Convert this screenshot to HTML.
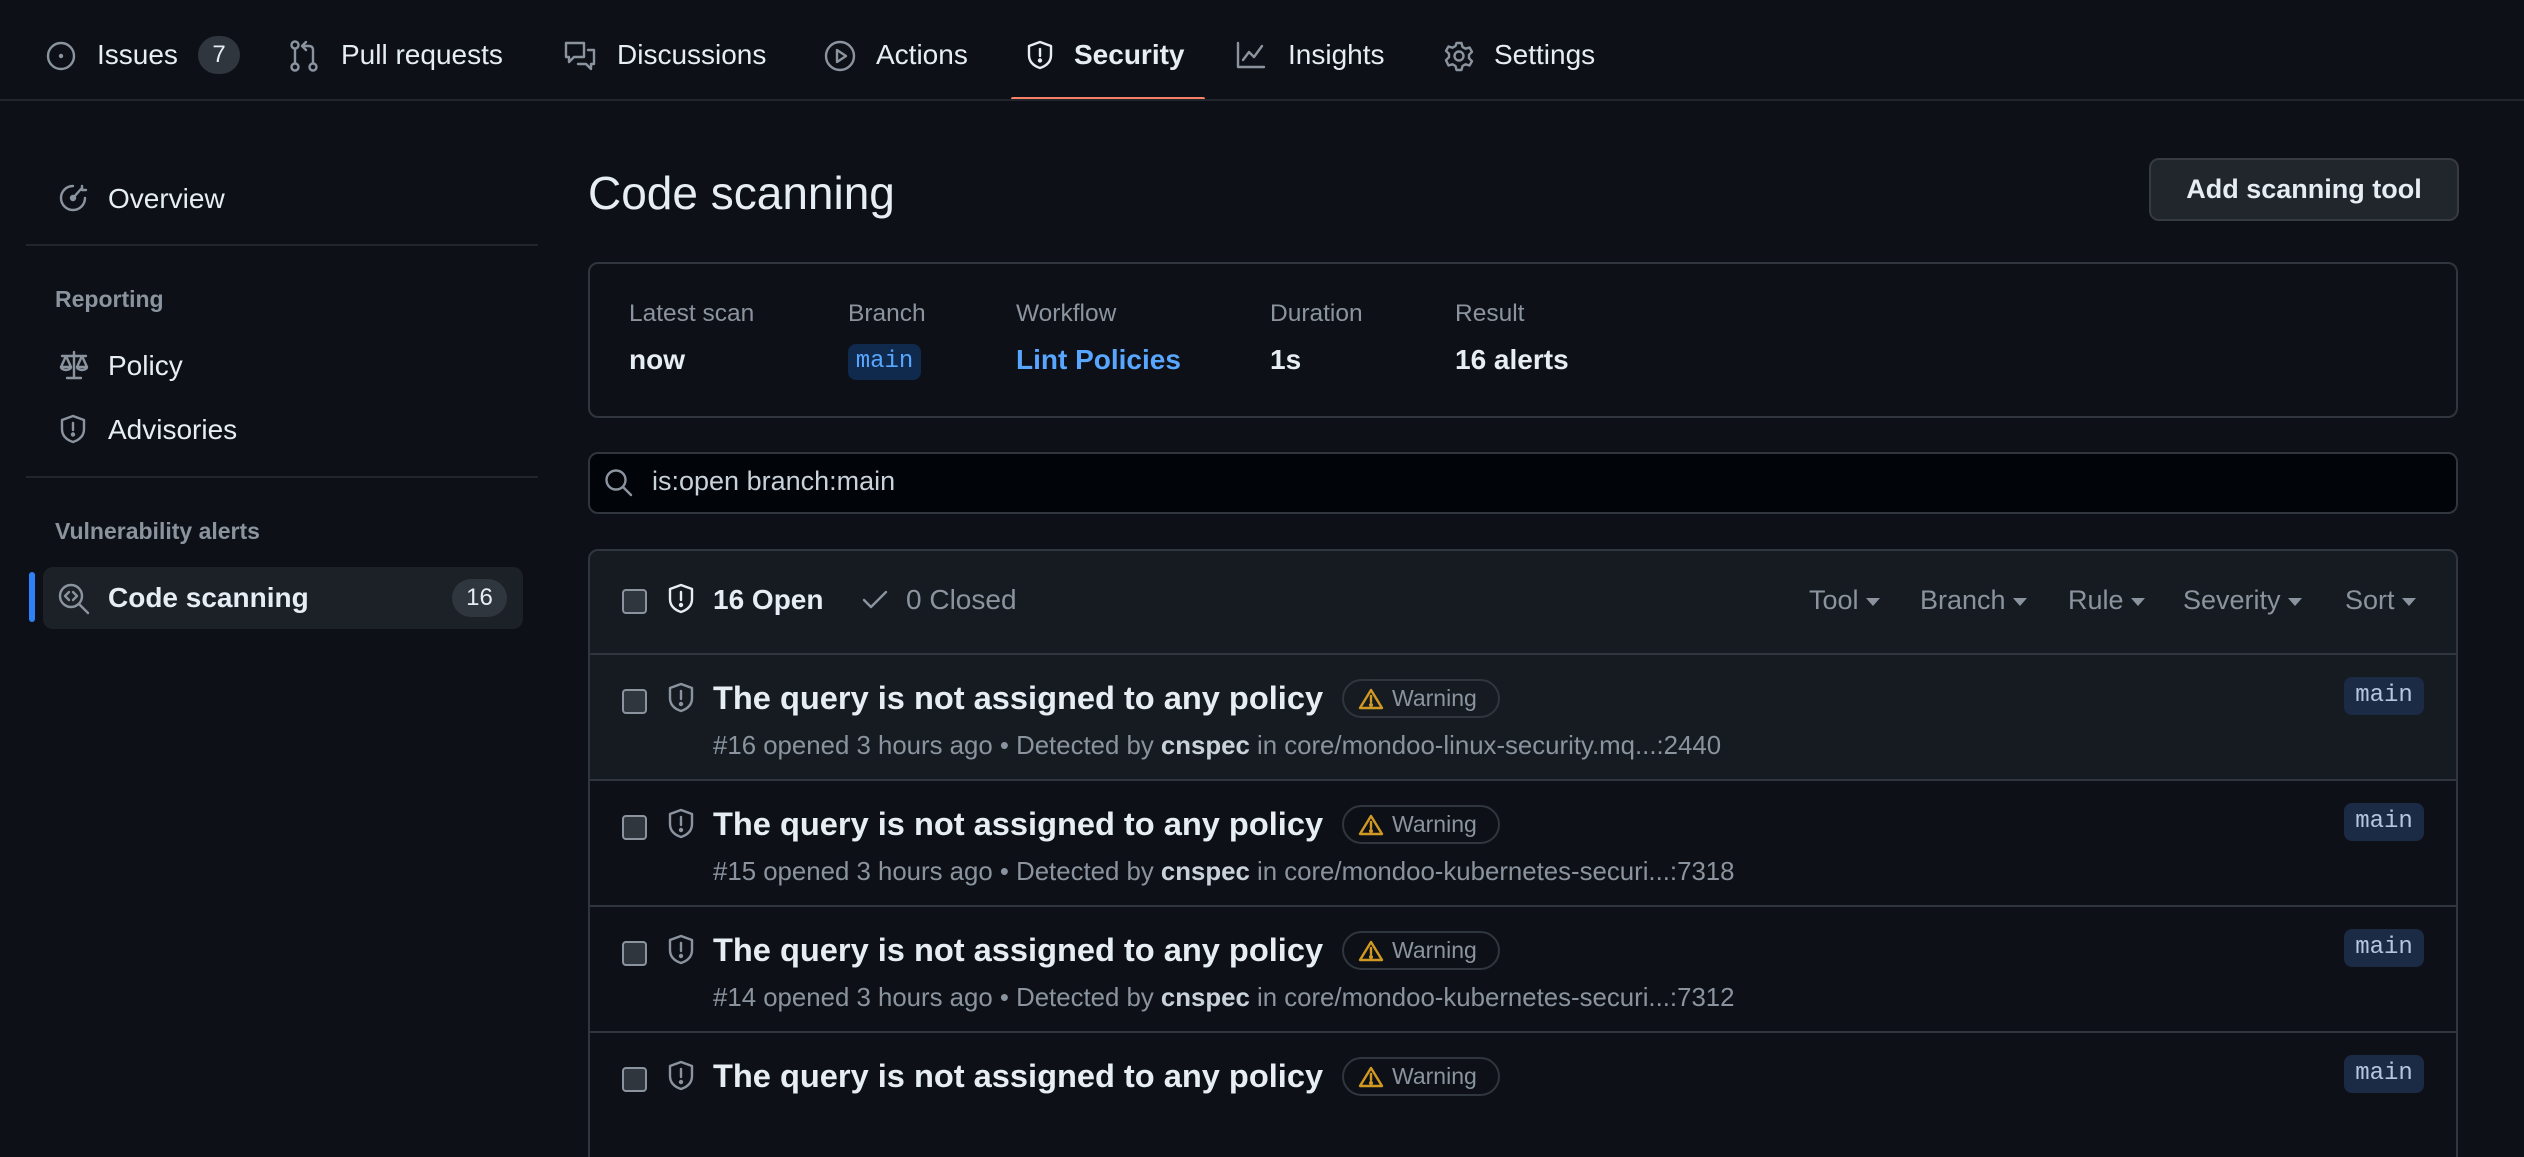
<!DOCTYPE html>
<html><head><meta charset="utf-8"><style>
*{box-sizing:border-box;margin:0;padding:0}
body{width:2524px;height:1086px;background:#0d1117;color:#e6edf3;font-family:"Liberation Sans",sans-serif;position:relative;overflow:hidden}
.a{position:absolute;white-space:nowrap}
.nav{font-size:28px;color:#e6edf3;top:37px;line-height:36px}
svg{position:absolute;fill:none;stroke:#8b949e;stroke-width:2.4;stroke-linecap:round;stroke-linejoin:round}
.sb{font-size:28px;line-height:36px}
.sh{font-size:23px;font-weight:bold;color:#8b949e}
.lbl{font-size:24.5px;color:#8b949e;top:300px}
.val{font-size:28px;font-weight:bold;top:344px}
.cb{position:absolute;width:25px;height:25px;border:2.5px solid #8b949e;border-radius:4px;background:#30363d}
.filt{font-size:27px;color:#8b949e;top:585px}
.filt:after{content:"";display:inline-block;margin-left:7px;border-left:7px solid transparent;border-right:7px solid transparent;border-top:8px solid #8b949e;vertical-align:middle}
.row{position:absolute;left:588px;width:1870px;height:126px;border-top:2px solid #30363d;border-left:2px solid #30363d;border-right:2px solid #30363d}
.t{position:absolute;left:123px;top:24px;font-size:32.6px;font-weight:bold;color:#e6edf3}
.m{position:absolute;left:123px;top:77px;font-size:25.8px;color:#8b949e}
.m b{color:#c9d1d9}
.w{position:absolute;left:752px;top:24px;width:158px;height:39px;border:2px solid #30363d;border-radius:20px;font-size:23px;color:#8b949e;line-height:35px;padding-left:48px}
.br{position:absolute;right:32px;top:22px;width:80px;height:38px;background:#1c2b45;border-radius:8px;font-family:"Liberation Mono",monospace;font-size:24px;color:#b4c6e0;text-align:center;line-height:38px}
</style></head><body>
<!-- top nav -->
<svg style="left:44px;top:39px" width="34" height="34" viewBox="0 0 34 34"><circle cx="17" cy="17" r="13"/><circle cx="17" cy="17" r="2.2" fill="#8b949e" stroke="none"/></svg>
<div class="a nav" style="left:97px">Issues</div>
<div class="a" style="left:198px;top:36px;width:42px;height:38px;border-radius:19px;background:#30363d;font-size:24px;text-align:center;line-height:38px">7</div>
<svg style="left:288px;top:39px" width="32" height="34" viewBox="0 0 32 34"><circle cx="7" cy="6" r="3.5"/><circle cx="7" cy="28" r="3.5"/><circle cx="25" cy="28" r="3.5"/><path d="M7 10v14M25 24V11q0-4-4-4h-6M18 3l-4 4 4 4"/></svg>
<div class="a nav" style="left:341px">Pull requests</div>
<svg style="left:563px;top:40px" width="34" height="32" viewBox="0 0 34 32"><path d="M3 3h18v14H11l-5 5v-5H3zM25 10h6v14h-3v5l-5-5h-8"/></svg>
<div class="a nav" style="left:617px">Discussions</div>
<svg style="left:822px;top:38px" width="36" height="36" viewBox="0 0 36 36"><circle cx="18" cy="18" r="14"/><path d="M15 12v12l9-6z"/></svg>
<div class="a nav" style="left:876px">Actions</div>
<svg style="left:1026px;top:39px;stroke:#e6edf3" width="28" height="32" viewBox="0 0 28 32"><path d="M14 3l11 4v9c0 7-5 11-11 13C8 27 3 23 3 16V7z"/><path d="M14 10v7"/><circle cx="14" cy="21.5" r="1" fill="#e6edf3"/></svg>
<div class="a nav" style="left:1074px;font-weight:bold">Security</div>
<div class="a" style="left:1011px;top:97px;width:194px;height:4px;background:#f78166;border-radius:2px"></div>
<svg style="left:1235px;top:40px" width="32" height="30" viewBox="0 0 32 30"><path d="M3 3v24h26M8 20l6-8 5 5 8-11"/></svg>
<div class="a nav" style="left:1288px">Insights</div>
<svg style="left:1443px;top:40px" width="32" height="32" viewBox="0 0 32 32"><circle cx="16" cy="16" r="4.5"/><path d="M13.5 3h5l1 4 3 1.7 4-1.2 2.5 4.3-3 3v3.4l3 3-2.5 4.3-4-1.2-3 1.7-1 4h-5l-1-4-3-1.7-4 1.2L3 20.2l3-3v-3.4l-3-3L5.5 6.5l4 1.2 3-1.7z"/></svg>
<div class="a nav" style="left:1494px">Settings</div>
<div class="a" style="left:0;top:99px;width:2524px;height:2px;background:#21262d"></div>

<!-- sidebar -->
<svg style="left:58px;top:183px" width="30" height="30" viewBox="0 0 30 30"><path d="M15 3a12 12 0 1 0 12 12"/><path d="M15 15l8-9M24 3v4h4"/><circle cx="15" cy="15" r="2"/></svg>
<div class="a sb" style="left:108px;top:181px">Overview</div>
<div class="a" style="left:26px;top:244px;width:512px;height:2px;background:#21262d"></div>
<div class="a sh" style="left:55px;top:286px">Reporting</div>
<svg style="left:58px;top:349px" width="32" height="32" viewBox="0 0 32 32"><path d="M16 3v26M9 29h14M4 7h24M8 7l-5 11h10zM24 7l-5 11h10zM3 18a5 3 0 0 0 10 0M19 18a5 3 0 0 0 10 0"/></svg>
<div class="a sb" style="left:108px;top:348px">Policy</div>
<svg style="left:59px;top:413px" width="28" height="32" viewBox="0 0 28 32"><path d="M14 3l11 4v9c0 7-5 11-11 13C8 27 3 23 3 16V7z"/><path d="M14 10v7"/><circle cx="14" cy="21.5" r="1" fill="#8b949e"/></svg>
<div class="a sb" style="left:108px;top:412px">Advisories</div>
<div class="a" style="left:26px;top:476px;width:512px;height:2px;background:#21262d"></div>
<div class="a sh" style="left:55px;top:518px">Vulnerability alerts</div>
<div class="a" style="left:29px;top:572px;width:6px;height:50px;background:#2f81f7;border-radius:3px"></div>
<div class="a" style="left:43px;top:567px;width:480px;height:62px;background:#1c2128;border-radius:10px"></div>
<svg style="left:57px;top:582px" width="34" height="34" viewBox="0 0 34 34"><circle cx="14" cy="14" r="11"/><path d="M22 22l9 9M12 10l-4 4 4 4M16 10l4 4-4 4"/></svg>
<div class="a sb" style="left:108px;top:580px;font-weight:bold">Code scanning</div>
<div class="a" style="left:452px;top:579px;width:55px;height:38px;background:#30363d;border-radius:19px;font-size:24px;text-align:center;line-height:38px">16</div>

<!-- main -->
<div class="a" style="left:588px;top:164px;font-size:46px;line-height:58px">Code scanning</div>
<div class="a" style="left:2149px;top:158px;width:310px;height:63px;background:#21262d;border:2px solid #363b42;border-radius:10px;font-size:27px;font-weight:bold;text-align:center;line-height:58px">Add scanning tool</div>

<div class="a" style="left:588px;top:262px;width:1870px;height:156px;border:2px solid #30363d;border-radius:10px"></div>
<div class="a lbl" style="left:629px">Latest scan</div>
<div class="a lbl" style="left:848px">Branch</div>
<div class="a lbl" style="left:1016px">Workflow</div>
<div class="a lbl" style="left:1270px">Duration</div>
<div class="a lbl" style="left:1455px">Result</div>
<div class="a val" style="left:629px">now</div>
<div class="a" style="left:848px;top:344px;width:73px;height:36px;background:#0f2a4d;border-radius:8px;font-family:'Liberation Mono',monospace;font-size:24px;color:#58a6ff;text-align:center;line-height:36px">main</div>
<div class="a val" style="left:1016px;color:#58a6ff">Lint Policies</div>
<div class="a val" style="left:1270px">1s</div>
<div class="a val" style="left:1455px">16 alerts</div>

<div class="a" style="left:588px;top:452px;width:1870px;height:62px;background:#010409;border:2px solid #30363d;border-radius:10px"></div>
<svg style="left:603px;top:467px" width="32" height="32" viewBox="0 0 32 32"><circle cx="13" cy="13" r="9.5"/><path d="M20 20l8 8"/></svg>
<div class="a" style="left:652px;top:466px;font-size:27px;color:#c9d1d9">is:open branch:main</div>

<!-- list header -->
<div class="a" style="left:588px;top:549px;width:1870px;height:106px;background:#161b22;border:2px solid #30363d;border-radius:10px 10px 0 0"></div>
<div class="cb" style="left:622px;top:589px"></div>
<svg style="left:667px;top:582px;stroke:#e6edf3" width="28" height="34" viewBox="0 0 28 34"><path d="M14 3l11 4v10c0 7-5 11-11 13C8 28 3 24 3 17V7z"/><path d="M14 10v8"/><circle cx="14" cy="23" r="1" fill="#e6edf3"/></svg>
<div class="a" style="left:713px;top:584px;font-size:28px;font-weight:bold">16 Open</div>
<svg style="left:861px;top:588px" width="28" height="24" viewBox="0 0 28 24"><path d="M3 12l7 7L25 4"/></svg>
<div class="a" style="left:906px;top:584px;font-size:28px;color:#8b949e">0 Closed</div>
<div class="a filt" style="left:1809px">Tool</div>
<div class="a filt" style="left:1920px">Branch</div>
<div class="a filt" style="left:2068px">Rule</div>
<div class="a filt" style="left:2183px">Severity</div>
<div class="a filt" style="left:2345px">Sort</div>

<!-- rows -->
<div class="row" style="top:653px;background:#161b22">
 <div class="cb" style="left:32px;top:34px"></div>
 <svg style="left:77px;top:26px" width="28" height="34" viewBox="0 0 28 34"><path d="M14 3l11 4v10c0 7-5 11-11 13C8 28 3 24 3 17V7z"/><path d="M14 10v8"/><circle cx="14" cy="23" r="1" fill="#8b949e"/></svg>
 <div class="t">The query is not assigned to any policy</div>
 <div class="w"><svg style="left:14px;top:6px;stroke:#d29922" width="26" height="24" viewBox="0 0 26 24"><path d="M13 3L2 21h22zM13 9v6"/><circle cx="13" cy="18" r=".8" fill="#d29922"/></svg>Warning</div>
 <div class="br">main</div>
 <div class="m">#16 opened 3 hours ago • Detected by <b>cnspec</b> in core/mondoo-linux-security.mq...:2440</div>
</div>
<div class="row" style="top:779px">
 <div class="cb" style="left:32px;top:34px"></div>
 <svg style="left:77px;top:26px" width="28" height="34" viewBox="0 0 28 34"><path d="M14 3l11 4v10c0 7-5 11-11 13C8 28 3 24 3 17V7z"/><path d="M14 10v8"/><circle cx="14" cy="23" r="1" fill="#8b949e"/></svg>
 <div class="t">The query is not assigned to any policy</div>
 <div class="w"><svg style="left:14px;top:6px;stroke:#d29922" width="26" height="24" viewBox="0 0 26 24"><path d="M13 3L2 21h22zM13 9v6"/><circle cx="13" cy="18" r=".8" fill="#d29922"/></svg>Warning</div>
 <div class="br">main</div>
 <div class="m">#15 opened 3 hours ago • Detected by <b>cnspec</b> in core/mondoo-kubernetes-securi...:7318</div>
</div>
<div class="row" style="top:905px">
 <div class="cb" style="left:32px;top:34px"></div>
 <svg style="left:77px;top:26px" width="28" height="34" viewBox="0 0 28 34"><path d="M14 3l11 4v10c0 7-5 11-11 13C8 28 3 24 3 17V7z"/><path d="M14 10v8"/><circle cx="14" cy="23" r="1" fill="#8b949e"/></svg>
 <div class="t">The query is not assigned to any policy</div>
 <div class="w"><svg style="left:14px;top:6px;stroke:#d29922" width="26" height="24" viewBox="0 0 26 24"><path d="M13 3L2 21h22zM13 9v6"/><circle cx="13" cy="18" r=".8" fill="#d29922"/></svg>Warning</div>
 <div class="br">main</div>
 <div class="m">#14 opened 3 hours ago • Detected by <b>cnspec</b> in core/mondoo-kubernetes-securi...:7312</div>
</div>
<div class="row" style="top:1031px">
 <div class="cb" style="left:32px;top:34px"></div>
 <svg style="left:77px;top:26px" width="28" height="34" viewBox="0 0 28 34"><path d="M14 3l11 4v10c0 7-5 11-11 13C8 28 3 24 3 17V7z"/><path d="M14 10v8"/><circle cx="14" cy="23" r="1" fill="#8b949e"/></svg>
 <div class="t">The query is not assigned to any policy</div>
 <div class="w"><svg style="left:14px;top:6px;stroke:#d29922" width="26" height="24" viewBox="0 0 26 24"><path d="M13 3L2 21h22zM13 9v6"/><circle cx="13" cy="18" r=".8" fill="#d29922"/></svg>Warning</div>
 <div class="br">main</div>
</div>
</body></html>
